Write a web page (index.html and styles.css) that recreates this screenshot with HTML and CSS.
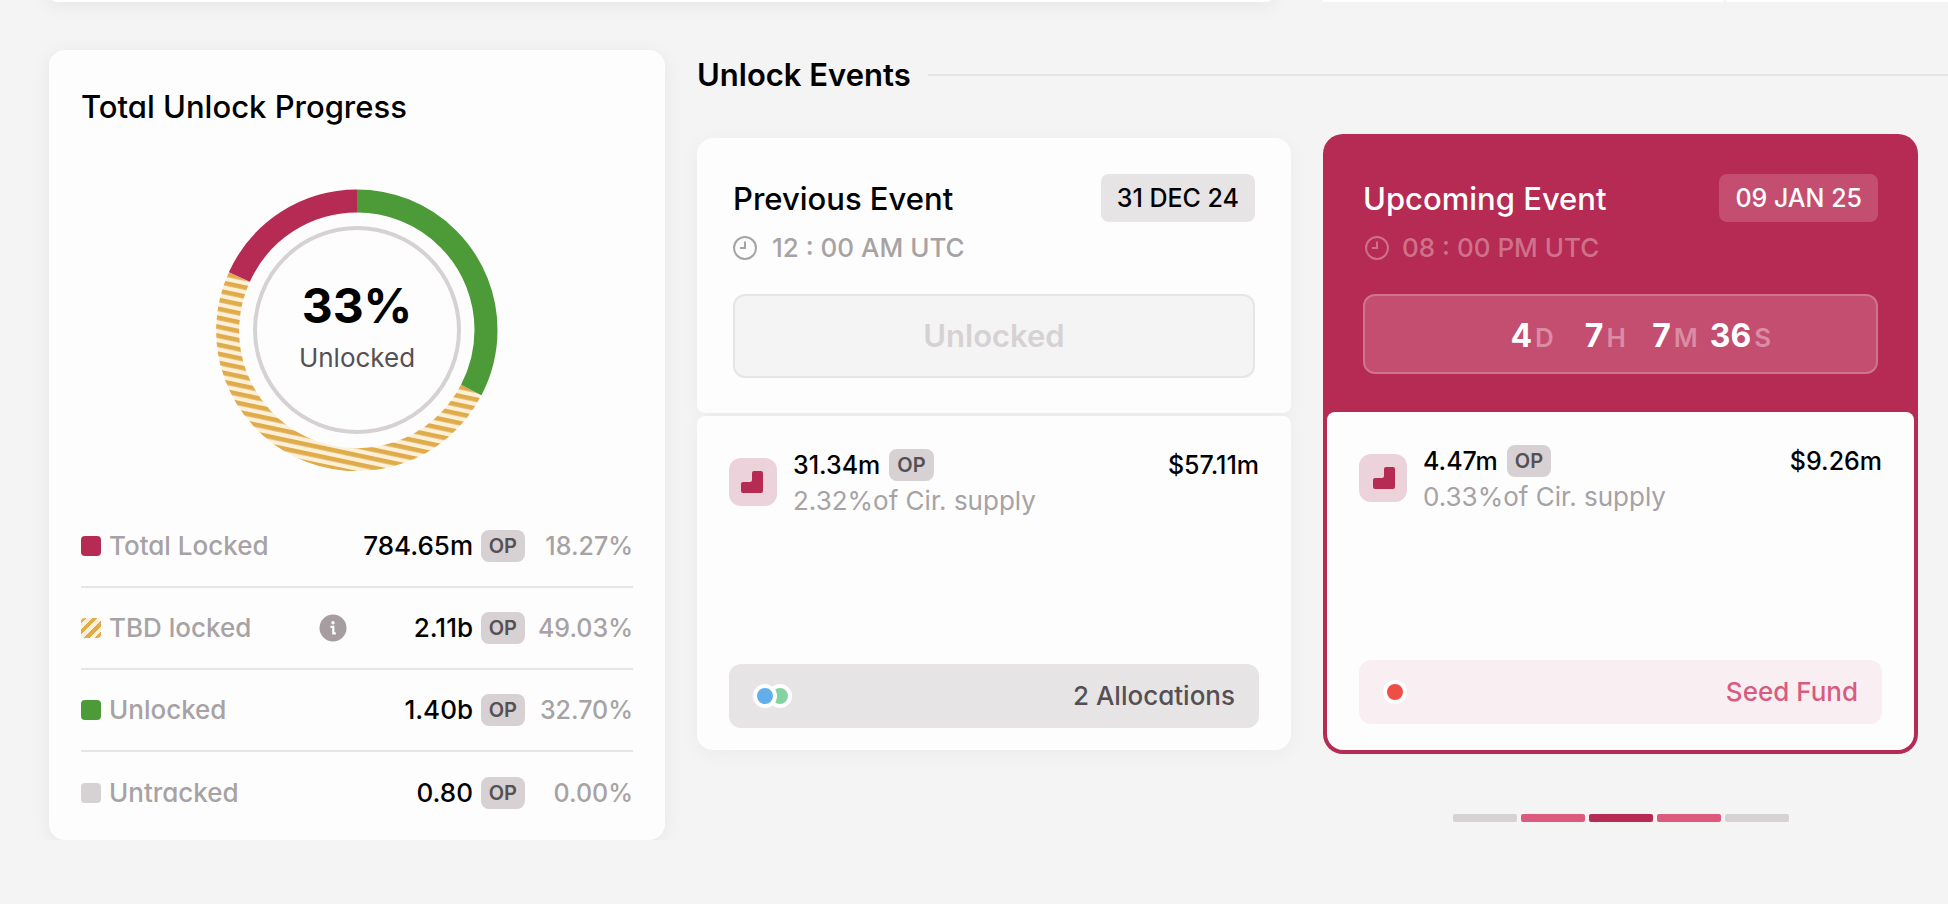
FILE: index.html
```html
<!DOCTYPE html>
<html lang="en">
<head>
<meta charset="utf-8">
<title>Unlock Progress</title>
<link rel="stylesheet" href="styles.css">
</head>
<body>
<div class="page">
  <div class="panels-above">
    <div class="panel-end"></div>
    <div class="panel-end panel-end-split"><span></span><span></span></div>
  </div>
  <main class="layout">
    <section class="card progress">
      <h2 class="card-title">Total Unlock Progress</h2>
      <div class="donut">
        <svg class="donut-chart" viewBox="0 0 282 282" aria-hidden="true">
          <defs>
            <pattern id="stripes" width="9" height="8.800" patternUnits="userSpaceOnUse" patternTransform="rotate(12)">
              <rect width="9" height="9" fill="#fdf0d9"/>
              <rect width="9" height="4.600" fill="#dfab4b"/>
            </pattern>
          </defs>
          <path d="M255.200 201A129 129 0 0 1 23.300 88.100" fill="none" stroke="url(#stripes)" stroke-width="23"/>
          <g fill="none" stroke-width="23" transform="rotate(-90 141 141)">
            <circle cx="141" cy="141" r="129" pathLength="100" stroke="#4c9a38" stroke-dasharray="32.7 100"/>
            <circle cx="141" cy="141" r="129" pathLength="100" stroke="#b52b53" stroke-dasharray="18.27 100" stroke-dashoffset="-81.73"/>
          </g>
          <circle cx="141" cy="141" r="102" fill="none" stroke="#d6d2d4" stroke-width="4"/>
        </svg>
        <div class="donut-label"><strong>33%</strong><span>Unlocked</span></div>
      </div>
      <table class="legend">
        <tbody>
          <tr><th scope="row"><span class="legend-name"><i class="swatch locked"></i>Total Locked</span></th><td class="amount">784.65m</td><td class="unit"><span class="tag">OP</span></td><td class="share">18.27%</td></tr>
          <tr><th scope="row"><span class="legend-name"><i class="swatch tbd"></i>TBD locked
            <button class="info" type="button" aria-label="About TBD locked"><svg viewBox="0 0 28 28" width="28" height="28" aria-hidden="true"><circle cx="14" cy="14" r="13.500" fill="#a79da1"/><circle cx="14" cy="8.800" r="1.700" fill="#fff"/><path d="M11.500 12.800H14.300V19.300H16.800" fill="none" stroke="#fff" stroke-width="2.200"/></svg></button></span></th><td class="amount">2.11b</td><td class="unit"><span class="tag">OP</span></td><td class="share">49.03%</td></tr>
          <tr><th scope="row"><span class="legend-name"><i class="swatch unlocked"></i>Unlocked</span></th><td class="amount">1.40b</td><td class="unit"><span class="tag">OP</span></td><td class="share">32.70%</td></tr>
          <tr><th scope="row"><span class="legend-name"><i class="swatch untracked"></i>Untracked</span></th><td class="amount">0.80</td><td class="unit"><span class="tag">OP</span></td><td class="share">0.00%</td></tr>
        </tbody>
      </table>
    </section>
    <section class="events">
      <h2 class="section-title">Unlock Events</h2>
      <div class="track">
        <article class="event previous">
          <header class="event-head">
            <div class="event-row"><h3 class="card-title">Previous Event</h3><time class="date">31 DEC 24</time></div>
            <p class="time"><svg viewBox="0 0 24 24" width="24" height="24" aria-hidden="true"><circle cx="12" cy="12" r="11" fill="none" stroke="currentColor" stroke-width="2"/><path d="M12 5.500V12H7" fill="none" stroke="currentColor" stroke-width="2"/></svg>12 : 00 AM UTC</p>
            <div class="status">Unlocked</div>
          </header>
          <div class="event-body">
            <div class="unlock">
              <span class="cliff"><svg viewBox="0 0 48 48" width="48" height="48" aria-hidden="true"><path d="M25 13h7a2 2 0 0 1 2 2v18a2 2 0 0 1-2 2H14a2 2 0 0 1-2-2v-7a2 2 0 0 1 2-2h7a2 2 0 0 0 2-2v-7a2 2 0 0 1 2-2z" fill="#b52b53"/></svg></span>
              <div class="unlock-text"><div class="unlock-row"><span class="figure">31.34m</span><span class="tag">OP</span></div><div class="supply">2.32%of Cir. supply</div></div>
              <span class="figure">$57.11m</span>
            </div>
            <button class="allocation" type="button"><span class="dots"><i class="dot blue"></i><i class="dot green"></i></span>2 Allocations</button>
          </div>
        </article>
        <article class="event upcoming">
          <header class="event-head">
            <div class="event-row"><h3 class="card-title">Upcoming Event</h3><time class="date">09 JAN 25</time></div>
            <p class="time"><svg viewBox="0 0 24 24" width="24" height="24" aria-hidden="true"><circle cx="12" cy="12" r="11" fill="none" stroke="currentColor" stroke-width="2"/><path d="M12 5.500V12H7" fill="none" stroke="currentColor" stroke-width="2"/></svg>08 : 00 PM UTC</p>
            <div class="status countdown"><span class="count"><b>4</b>D</span><span class="count"><b>7</b>H</span><span class="count"><b>7</b>M</span><span class="count"><b>36</b>S</span></div>
          </header>
          <div class="event-body">
            <div class="unlock">
              <span class="cliff"><svg viewBox="0 0 48 48" width="48" height="48" aria-hidden="true"><path d="M27 13h7a2 2 0 0 1 2 2v18a2 2 0 0 1-2 2H16a2 2 0 0 1-2-2v-7a2 2 0 0 1 2-2h7a2 2 0 0 0 2-2v-7a2 2 0 0 1 2-2z" fill="#b52b53"/></svg></span>
              <div class="unlock-text"><div class="unlock-row"><span class="figure">4.47m</span><span class="tag">OP</span></div><div class="supply">0.33%of Cir. supply</div></div>
              <span class="figure">$9.26m</span>
            </div>
            <button class="allocation" type="button"><span class="dots"><i class="dot red"></i></span>Seed Fund</button>
          </div>
        </article>
      </div>
      <nav class="pager" aria-label="Events">
        <button type="button" aria-label="Event 1"></button><button class="near" type="button" aria-label="Event 2"></button><button class="current" type="button" aria-label="Event 3"></button><button class="near" type="button" aria-label="Event 4"></button><button type="button" aria-label="Event 5"></button>
      </nav>
    </section>
  </main>
</div>
</body>
</html>
```
FILE: styles.css
```css
* { box-sizing: border-box; }
body {
  margin: 0;
  background: #f4f4f4;
  color: #000;
  font-family: Inter, "Liberation Sans", sans-serif;
  font-feature-settings: "cv11";
  font-size: 26px;
  font-weight: 500;
  line-height: 36px;
  overflow: hidden;
}
h2, h3, p { margin: 0; }
button { font: inherit; color: inherit; border: 0; padding: 0; background: none; cursor: pointer; }
.page { display: flex; flex-direction: column; gap: 48px; padding-left: 49px; }
.panels-above { display: grid; grid-template-columns: 1225fr 625fr; gap: 49px; height: 42px; margin-top: -40px; }
.panel-end { background: #fff; border-radius: 0 0 8px 8px; box-shadow: 0 4px 20px rgba(0, 0, 0, .06); }
.panel-end-split { display: flex; gap: 3px; background: none; box-shadow: none; }
.panel-end-split span { flex: 400 1 0; background: #fff; }
.panel-end-split span + span { flex-grow: 222; }
.layout { display: grid; grid-template-columns: 616fr 1251fr; gap: 32px; align-items: start; }
.card { background: #fdfdfd; border-radius: 16px; box-shadow: 0 4px 20px rgba(0, 0, 0, .06); }
.card-title { font-size: 31px; font-weight: 500; line-height: 50px; }
.progress { padding: 32px 32px 7px; }
.donut { display: grid; place-items: center; padding: 57px 0 34px; }
.donut > * { grid-area: 1 / 1; }
.donut-chart { width: 282px; }
.donut-label { display: flex; flex-direction: column; align-items: center; gap: 4px; padding-bottom: 8px; color: #555053; font-weight: 400; }
.donut-label strong { color: #000; font-size: 48px; line-height: 60px; font-weight: 700; }
.legend { width: 100%; border-collapse: collapse; table-layout: fixed; }
.legend th, .legend td { padding: 0; height: 82px; font-weight: 500; text-align: right; }
.legend tr + tr { border-top: 2px solid #e6e4e5; }
.legend th { text-align: left; color: #a7a2a4; }
.legend-name { display: flex; align-items: center; gap: 8px; }
.swatch { width: 20px; height: 20px; border-radius: 4px; }
.locked { background: #b52b53; }
.tbd { background: repeating-linear-gradient(135deg, #dfab4b 0 4px, #fdf0d9 4px 8px); }
.unlocked { background: #4c9a38; }
.untracked { background: #d6d2d4; }
.info { display: flex; margin-left: auto; margin-right: 16px; }
.legend .amount { width: 110px; }
.legend .unit { width: 52px; }
.legend .share { width: 108px; color: #a7a2a4; font-size: 25px; }
.tag { display: inline-block; padding: 0 8px; border-radius: 8px; background: #d7d1d4; color: #555053; font-size: 20px; font-weight: 600; line-height: 32px; }
.unit .tag { display: block; width: max-content; margin-left: auto; }
.section-title { display: flex; align-items: center; gap: 17px; font-size: 31px; font-weight: 600; line-height: 50px; }
.section-title::after { content: ""; flex: 1; height: 2px; background: #e6e4e5; }
.track { display: grid; grid-template-columns: 594fr 595fr; gap: 32px; margin-top: 34px; padding-right: 30px; }
.event { display: flex; flex-direction: column; border-radius: 20px; }
.event-head { display: flex; flex-direction: column; padding: 36px; }
.event-row { display: flex; align-items: flex-start; justify-content: space-between; }
.date, .figure { font-size: 25px; }
.date { padding: 0 16px; border-radius: 8px; background: #e7e4e5; line-height: 48px; }
.time { display: flex; align-items: center; gap: 15px; margin-top: 6px; color: #a7a2a4; }
.status { display: flex; align-items: center; justify-content: center; margin-top: 28px; height: 84px; border: 2px solid #e6e4e5; border-radius: 12px; background: #f4f4f4; color: #d6d2d4; font-size: 31px; font-weight: 600; }
.event-body { flex: 1; display: flex; flex-direction: column; justify-content: space-between; padding: 31px 32px 22px; }
.unlock { display: flex; gap: 16px; }
.cliff { display: flex; width: 48px; height: 48px; margin-top: 11px; border-radius: 12px; background: #ecd2db; }
.unlock-text { flex: 1; }
.unlock-row { display: flex; align-items: center; gap: 9px; }
.supply { color: #a7a2a4; font-weight: 400; }
.allocation { display: flex; align-items: center; justify-content: space-between; height: 64px; padding: 0 24px; border-radius: 12px; background: #e7e4e5; color: #555053; }
.dots { display: flex; }
.dot { width: 24px; height: 24px; border: 4px solid #fff; border-radius: 50%; }
.dot + .dot { margin-left: -9px; }
.blue { position: relative; z-index: 1; background: #62aeea; }
.green { background: #86d3a2; }
.red { background: #f04e45; }
.previous { margin-top: 4px; margin-bottom: 4px; }
.previous .event-head, .previous .event-body { background: #fdfdfd; box-shadow: 0 4px 20px rgba(0, 0, 0, .04); }
.previous .event-head { border-radius: 16px 16px 8px 8px; padding-bottom: 35px; }
.previous .event-body { margin-top: 3px; border-radius: 8px 8px 16px 16px; }
.upcoming { min-height: 620px; padding: 4px; background: #b52b53; color: #fff; }
.upcoming .event-head { padding-bottom: 38px; }
.upcoming .date { background: #c34e70; }
.upcoming .time { gap: 13px; padding-left: 2px; color: #d0718c; }
.upcoming .status { height: 80px; border-color: #cf7390; background: #c34e70; color: #fff; }
.countdown { gap: 12px; padding-left: 24px; }
.count { display: flex; align-items: baseline; justify-content: flex-end; gap: 3px; min-width: 60px; padding-top: 6px; color: #db8ba4; font-size: 26px; }
.count b { color: #fff; font-size: 32px; font-weight: 700; }
.upcoming .event-body { padding-bottom: 26px; border-radius: 8px 8px 16px 16px; background: #fdfdfd; color: #000; }
.upcoming .allocation { background: #f9eff2; color: #d85c7f; }
.pager { display: flex; justify-content: center; gap: 4px; margin-top: 60px; padding-left: 596px; }
.pager button { width: 64px; height: 8px; border-radius: 2px; background: #d6d2d4; }
.pager .near { background: #dc5b7d; }
.pager .current { background: #b52b53; }
```
